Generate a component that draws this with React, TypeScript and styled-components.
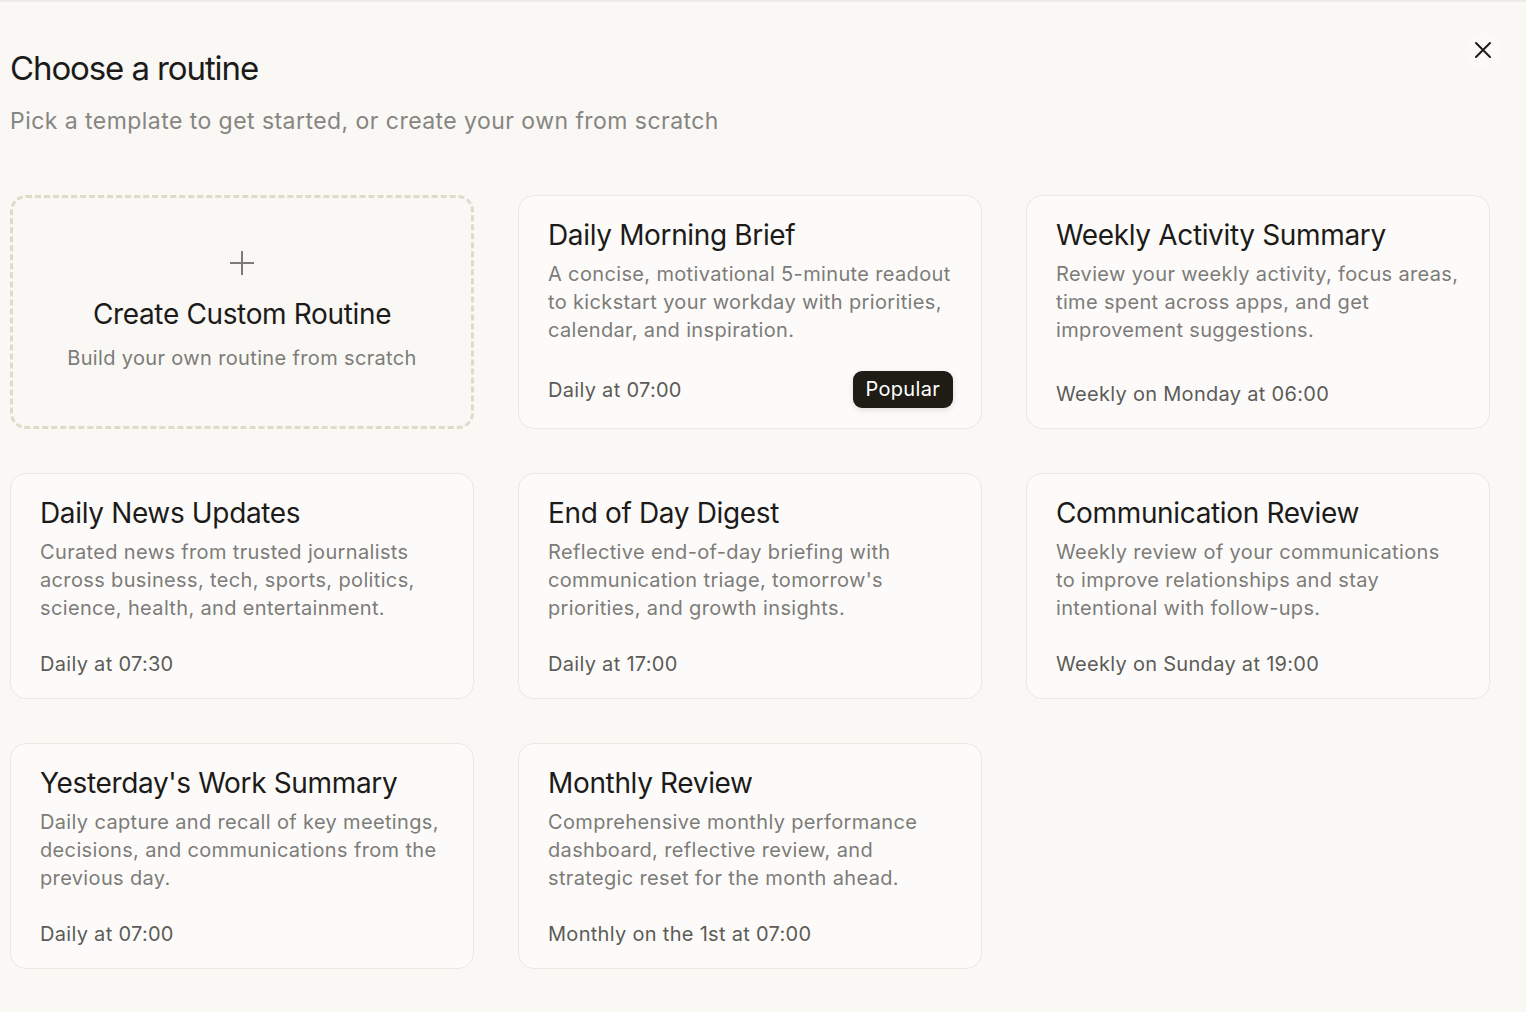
import React, { FC } from 'react';
import styled, { createGlobalStyle } from 'styled-components';

interface IRoutine {
  id: string;
  title: string;
  description: string;
  schedule: string;
  popular?: boolean;
}

const routines: IRoutine[] = [
  {
    id: 'morning',
    title: 'Daily Morning Brief',
    description:
      'A concise, motivational 5-minute readout to kickstart your workday with priorities, calendar, and inspiration.',
    schedule: 'Daily at 07:00',
    popular: true
  },
  {
    id: 'weekly-activity',
    title: 'Weekly Activity Summary',
    description:
      'Review your weekly activity, focus areas, time spent across apps, and get improvement suggestions.',
    schedule: 'Weekly on Monday at 06:00'
  },
  {
    id: 'news',
    title: 'Daily News Updates',
    description:
      'Curated news from trusted journalists across business, tech, sports, politics, science, health, and entertainment.',
    schedule: 'Daily at 07:30'
  },
  {
    id: 'eod',
    title: 'End of Day Digest',
    description:
      "Reflective end-of-day briefing with communication triage, tomorrow's priorities, and growth insights.",
    schedule: 'Daily at 17:00'
  },
  {
    id: 'communication',
    title: 'Communication Review',
    description:
      'Weekly review of your communications to improve relationships and stay intentional with follow-ups.',
    schedule: 'Weekly on Sunday at 19:00'
  },
  {
    id: 'yesterday',
    title: "Yesterday's Work Summary",
    description:
      'Daily capture and recall of key meetings, decisions, and communications from the previous day.',
    schedule: 'Daily at 07:00'
  },
  {
    id: 'monthly',
    title: 'Monthly Review',
    description:
      'Comprehensive monthly performance dashboard, reflective review, and strategic reset for the month ahead.',
    schedule: 'Monthly on the 1st at 07:00'
  }
];

const RoutineCard: FC<{ routine: IRoutine }> = ({ routine }) => (
  <Card>
    <CardTitle>{routine.title}</CardTitle>
    <CardDescription>{routine.description}</CardDescription>
    <CardFooter>
      <Schedule>{routine.schedule}</Schedule>
      {routine.popular && <Badge>Popular</Badge>}
    </CardFooter>
  </Card>
);

const App: FC = () => (
  <>
    <GlobalStyle />
    <Dialog>
      <CloseButton aria-label="Close">
        <svg width="20" height="20" viewBox="0 0 20 20" fill="none">
          <path d="M3 3L17 17M17 3L3 17" stroke="#1c1b19" strokeWidth="2" strokeLinecap="round" />
        </svg>
      </CloseButton>
      <Header>
        <Title>Choose a routine</Title>
        <Subtitle>Pick a template to get started, or create your own from scratch</Subtitle>
      </Header>
      <Grid>
        <CreateCard>
          <svg width="26" height="26" viewBox="0 0 26 26" fill="none">
            <path d="M13 1V25M1 13H25" stroke="#7b7a77" strokeWidth="2" />
          </svg>
          <CreateTitle>Create Custom Routine</CreateTitle>
          <CreateText>Build your own routine from scratch</CreateText>
        </CreateCard>
        {routines.map((routine) => (
          <RoutineCard key={routine.id} routine={routine} />
        ))}
      </Grid>
    </Dialog>
  </>
);

export default App;

const GlobalStyle = createGlobalStyle`
  html, body {
    margin: 0;
    padding: 0;
    background: #f9f8f5;
  }
  body {
    font-family: Inter, "Noto Sans", sans-serif;
    -webkit-font-smoothing: antialiased;
  }
`;

const Dialog = styled.div`
  position: relative;
  min-height: 1012px;
  box-sizing: border-box;
  border-top: 2px solid #ebeae6;
  padding: 45px 36px 40px 10px;
  background: #f9f8f5;
`;

const CloseButton = styled.button`
  position: absolute;
  top: 30px;
  right: 25px;
  width: 36px;
  height: 36px;
  border: none;
  border-radius: 50%;
  background: #fbfaf8;
  display: flex;
  align-items: center;
  justify-content: center;
  padding: 0;
  cursor: pointer;
`;

const Header = styled.header`
  display: flex;
  flex-direction: column;
  gap: 16px;
  margin-bottom: 58px;
`;

const Title = styled.h1`
  margin: 0;
  font-size: 33px;
  line-height: 42px;
  font-weight: 400;
  letter-spacing: -1.1px;
  color: #1c1b19;
`;

const Subtitle = styled.p`
  margin: 0;
  font-size: 23px;
  line-height: 32px;
  font-weight: 400;
  letter-spacing: 0.45px;
  color: #868580;
`;

const Grid = styled.div`
  display: grid;
  grid-template-columns: repeat(3, 464px);
  gap: 44px;
`;

const Card = styled.div`
  display: flex;
  flex-direction: column;
  box-sizing: border-box;
  min-height: 226px;
  padding: 20px 28px 20px 29px;
  background: #fcfbfa;
  border: 1.5px solid #ebe8e1;
  border-radius: 16px;
`;

const CardTitle = styled.h3`
  margin: 0 0 6px;
  font-size: 28px;
  line-height: 38px;
  font-weight: 400;
  letter-spacing: -0.35px;
  color: #1c1b19;
`;

const CardDescription = styled.p`
  margin: 0;
  font-size: 20px;
  line-height: 28px;
  letter-spacing: 0.35px;
  color: #7d7c78;
`;

const CardFooter = styled.div`
  margin-top: auto;
  padding-top: 27px;
  display: flex;
  align-items: center;
  justify-content: space-between;
`;

const Schedule = styled.span`
  font-size: 20px;
  line-height: 28px;
  letter-spacing: 0.3px;
  color: #5c5b57;
`;

const Badge = styled.span`
  padding: 4px 13px 5px;
  font-size: 20px;
  line-height: 28px;
  letter-spacing: 0.3px;
  color: #ffffff;
  background: #1f1c15;
  border-radius: 9px;
  box-shadow: 0 2px 6px rgba(0, 0, 0, 0.12);
`;

const CreateCard = styled.div`
  display: flex;
  flex-direction: column;
  align-items: center;
  justify-content: center;
  box-sizing: border-box;
  border: 3px dashed #e0dac8;
  border-radius: 16px;
  padding: 20px 0 22px;
`;

const CreateTitle = styled.h3`
  margin: 20px 0 12px;
  font-size: 28px;
  line-height: 36px;
  font-weight: 400;
  letter-spacing: -0.35px;
  color: #1c1b19;
`;

const CreateText = styled.p`
  margin: 0;
  font-size: 20px;
  line-height: 28px;
  letter-spacing: 0.35px;
  color: #7d7c78;
`;
